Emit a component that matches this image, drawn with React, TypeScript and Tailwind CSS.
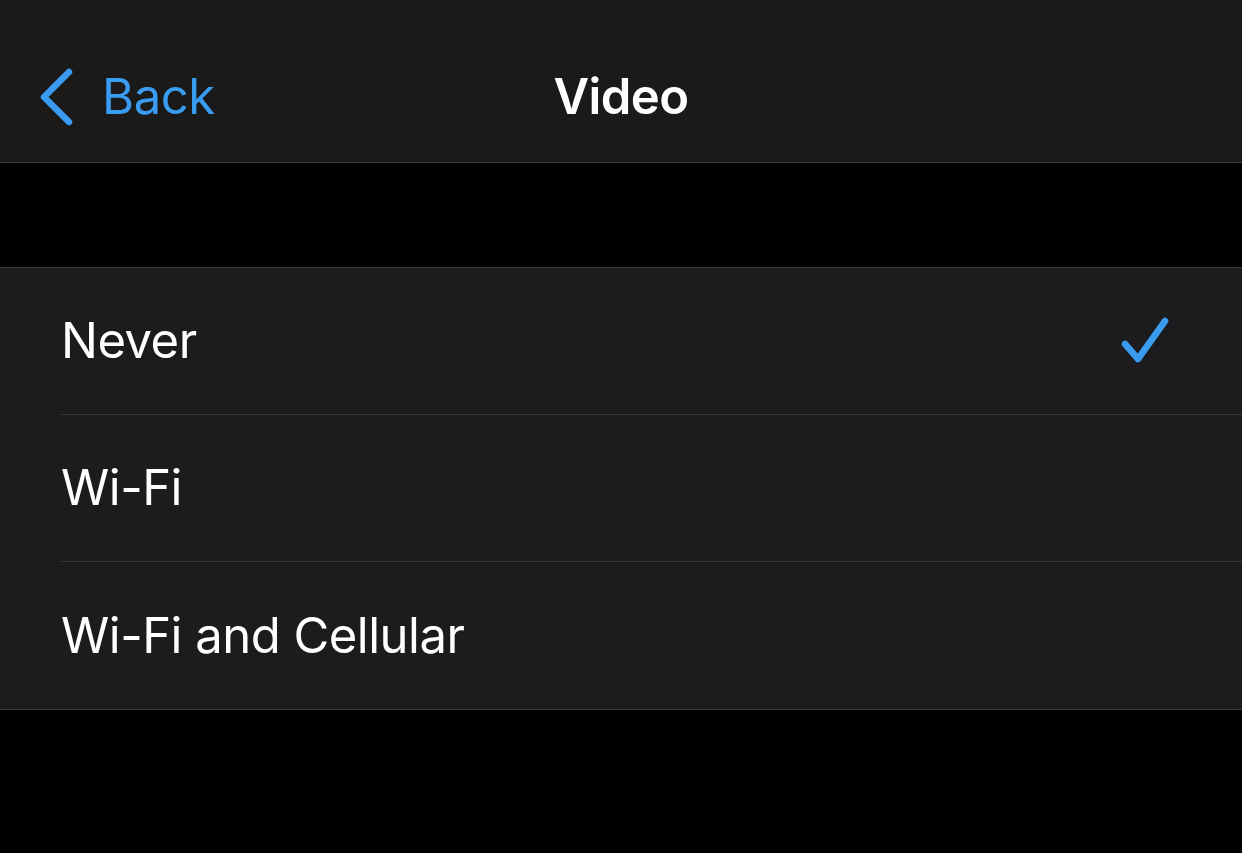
import React from "react";

const options = ["Never", "Wi-Fi", "Wi-Fi and Cellular"];

const App: React.FC = () => {
  const selected = "Never";

  return (
    <div
      className="w-[1242px] h-[853px] bg-black text-white overflow-hidden"
      style={{ fontFamily: "Inter, 'Liberation Sans', sans-serif" }}
    >
      <header className="relative h-[163px] bg-[#1a1a1a] border-b border-[#38383a] flex items-start justify-center pt-[72px]">
        <button className="absolute left-[38px] top-[68px] flex items-start text-[#3a9cf0]">
          <svg width="36" height="58" viewBox="0 0 36 58" fill="none">
            <path
              d="M31 4 L6 29 L31 54"
              stroke="currentColor"
              strokeWidth="6.5"
              strokeLinecap="round"
              strokeLinejoin="round"
            />
          </svg>
          <span className="ml-[28px] mt-[4px] text-[49px] leading-none tracking-[-0.4px]">Back</span>
        </button>
        <h1 className="text-[49px] font-semibold leading-none tracking-[-0.6px]">Video</h1>
      </header>

      <div className="h-[104px]" />

      <ul className="bg-[#1c1c1e] border-y border-[#38383a]">
        {options.map((opt, i) => (
          <li key={opt} className="pl-[61px]">
            <div
              className={
                "h-[147px] flex items-center justify-between pr-[72px] " +
                (i < options.length - 1 ? "border-b border-[#38383a]" : "")
              }
            >
              <span className="text-[49px] leading-none -mt-[1px] tracking-[-0.5px]">{opt}</span>
              {opt === selected && (
                <svg width="50" height="48" viewBox="0 0 50 48" fill="none" className="-mt-[2px]">
                  <path
                    d="M5 28 L18 43 L45 5"
                    stroke="#3a9cf0"
                    strokeWidth="6.5"
                    strokeLinecap="round"
                    strokeLinejoin="round"
                  />
                </svg>
              )}
            </div>
          </li>
        ))}
      </ul>
    </div>
  );
};

export default App;
